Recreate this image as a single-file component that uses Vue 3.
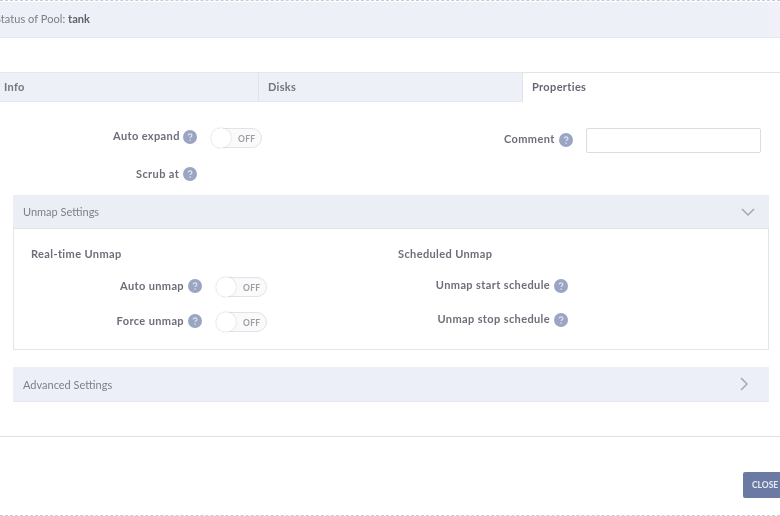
<template>
  <div class="page">
    <div class="dash"></div>
    <header class="status">
      <span class="status-text">Status of Pool: <b>tank</b></span>
    </header>

    <nav class="tabs">
      <div class="tab info">Info</div>
      <div class="tab disks">Disks</div>
      <div class="tab active">Properties</div>
    </nav>

    <section class="props">
      <div class="prop-col left">
        <div class="field first">
          <span class="label">Auto expand</span>
          <HelpIcon />
          <span class="toggle"><i class="knob"></i><span class="off">OFF</span></span>
        </div>
        <div class="field scrub">
          <span class="label">Scrub at</span>
          <HelpIcon />
        </div>
      </div>
      <div class="prop-col right">
        <span class="label">Comment</span>
        <HelpIcon />
        <span class="comment"></span>
      </div>
    </section>

    <section class="panel">
      <div class="panel-head open">
        <span>Unmap Settings</span>
        <svg class="chev" width="16" height="10" viewBox="0 0 16 10"><path d="M2 2l6 6 6-6" /></svg>
      </div>
      <div class="panel-body">
        <div class="unmap-col real">
          <h4>Real-time Unmap</h4>
          <div class="unmap-row">
            <span class="label">Auto unmap</span>
            <HelpIcon />
            <span class="toggle"><i class="knob"></i><span class="off">OFF</span></span>
          </div>
          <div class="unmap-row">
            <span class="label">Force unmap</span>
            <HelpIcon />
            <span class="toggle"><i class="knob"></i><span class="off">OFF</span></span>
          </div>
        </div>
        <div class="unmap-col sched">
          <h4>Scheduled Unmap</h4>
          <div class="unmap-row">
            <span class="label">Unmap start schedule</span>
            <HelpIcon />
          </div>
          <div class="unmap-row">
            <span class="label">Unmap stop schedule</span>
            <HelpIcon />
          </div>
        </div>
      </div>
    </section>

    <section class="panel advanced">
      <div class="panel-head closed">
        <span>Advanced Settings</span>
        <svg class="chev" width="10" height="16" viewBox="0 0 10 16"><path d="M2 2l6 6-6 6" /></svg>
      </div>
    </section>

    <div class="rule"></div>

    <footer class="foot">
      <span class="close">CLOSE</span>
    </footer>
    <div class="dash bottom"></div>
  </div>
</template>

<script setup>
import { h } from 'vue'

const HelpIcon = () =>
  h('span', { class: 'help-wrap' }, [
    h('svg', { width: 14, height: 14, viewBox: '0 0 14 14', style: 'display:block' }, [
      h('circle', { cx: 7, cy: 7, r: 7, fill: '#9aa5c4' }),
      h('path', {
        d: 'M5.2 5.4c.1-1 .9-1.6 1.9-1.6s1.8.7 1.8 1.6c0 1.3-1.8 1.3-1.8 2.7',
        fill: 'none',
        stroke: '#dfe3ef',
        'stroke-width': 1.2
      }),
      h('circle', { cx: 7.1, cy: 10.1, r: 0.8, fill: '#dfe3ef' })
    ])
  ])
</script>

<style>
html, body { margin: 0; background: #fff; }
</style>

<style scoped>
.page {
  width: 780px;
  height: 516px;
  overflow: hidden;
  position: relative;
  background: #fff;
  font-family: Lato, "Open Sans", sans-serif;
  color: #6b6e78;
  font-size: 11px;
  filter: blur(0.5px);
  display: flex;
  flex-direction: column;
}
.dash {
  height: 0;
  border-top: 1px dashed #c9cbd2;
  flex: none;
}
.status {
  margin-top: 1px;
  height: 35px;
  flex: none;
  background: linear-gradient(to right, #eef0f8 768px, #f0f1f8 768px);
  border-bottom: 1px solid #e6e7ee;
  display: flex;
  align-items: center;
}
.status-text {
  margin-left: -5px;
  margin-bottom: 2px;
  color: #7b7e88;
  letter-spacing: 0.05px;
}
.status-text b { color: #5f626c; }

.tabs {
  margin-top: 34px;
  height: 30px;
  flex: none;
  display: flex;
}
.tab {
  box-sizing: border-box;
  padding-left: 4px;
  line-height: 27px;
  font-weight: 700;
  background: #eef0f8;
  border-bottom: 1px solid #e6e7ee;
  border-top: 1px solid #e6e7ee;
  color: #71747e;
  letter-spacing: 0.3px;
}
.tab.info { width: 259px; border-right: 1px solid #e2e3ea; }
.tab.disks { width: 264px; padding-left: 9px; border-right: 1px solid #e2e3ea; }
.tab.active {
  flex: 1;
  background: #fff;
  padding-left: 9px;
  border-bottom: 0;
  border-top: 1px solid #e2e3e8;
  color: #666973;
  letter-spacing: 0.35px;
}

.props {
  height: 93px;
  flex: none;
  display: flex;
}
.prop-col.left { width: 480px; }
.prop-col.right {
  flex: 1;
  display: flex;
  align-items: flex-start;
  margin-top: 26px;
  margin-left: 24px;
}
.field {
  display: flex;
  align-items: center;
  padding-left: 113px;
}
.field.first { margin-top: 26px; }
.field.first .label { margin-bottom: 6px; width: 66px; }
.field.first :deep(.help-wrap) { margin-bottom: 2px; }
.field.scrub { margin-top: 17px; padding-left: 136px; }
.field.scrub :deep(.help-wrap) { margin-top: 2px; }
.field.scrub .label { width: 43px; }
.label {
  font-weight: 700;
  color: #6c6f79;
  white-space: nowrap;
  letter-spacing: 0.38px;
}
:deep(.help-wrap) { display: inline-block; margin-left: 4px; flex: none; }
.toggle {
  margin-left: 14px;
  width: 51px;
  height: 20px;
  box-sizing: border-box;
  border: 1px solid #e2e3e8;
  border-radius: 10px;
  position: relative;
  display: inline-block;
  flex: none;
  background: #fafafb;
}
.knob {
  position: absolute;
  left: -1px;
  top: -1px;
  width: 20px;
  height: 20px;
  border-radius: 50%;
  background: #fff;
  box-shadow: 0 0 2px rgba(0, 0, 0, 0.18);
}
.off {
  position: absolute;
  left: 26px;
  top: 5px;
  font-size: 8.5px;
  line-height: 10px;
  font-weight: 700;
  color: #9b9da5;
  letter-spacing: 0.3px;
}
.prop-col.right > .label { margin-top: 4px; }
.prop-col.right > :deep(.help-wrap) { margin-top: 5px; }
.comment {
  margin-left: 13px;
  width: 175px;
  height: 25px;
  box-sizing: border-box;
  border: 1px solid #dcdde2;
  border-radius: 2px;
  flex: none;
}

.panel {
  margin-left: 13px;
  width: 756px;
  flex: none;
  box-sizing: border-box;
}
.panel-head {
  display: flex;
  align-items: center;
  justify-content: space-between;
  padding: 0 13px 0 10px;
  color: #7d808a;
  box-sizing: border-box;
}
.panel-head.open { height: 34px; background: #eceef5; border-bottom: 1px solid #e3e4ea; }
.panel-head.closed { height: 35px; background: #eceff8; border-bottom: 1px solid #e6e7ee; padding-right: 20px; }
.chev path { fill: none; stroke: #a4a7b0; stroke-width: 1.5; }
.panel-body {
  height: 121px;
  border: 1px solid #e4e5ea;
  border-top: 0;
  display: flex;
  box-sizing: border-box;
}
.unmap-col h4 {
  margin: 18px 0 0;
  font-size: 11px;
  font-weight: 700;
  line-height: 14px;
  color: #6c6f79;
  letter-spacing: 0.38px;
}
.unmap-col.real { width: 366px; padding-left: 17px; box-sizing: border-box; }
.unmap-col.sched { flex: 1; padding-left: 18px; }
.unmap-row {
  display: flex;
  align-items: center;
  height: 20px;
  justify-content: flex-end;
}
.real .unmap-row { margin-top: 14px; width: 236px; }
.real .unmap-row + .unmap-row { margin-top: 15px; }
.real .toggle { margin-top: 4px; }
.real :deep(.help-wrap) { margin-top: 2px; }
.sched .unmap-row { width: 170px; margin-top: 13px; }
.sched .unmap-row + .unmap-row { margin-top: 14px; }
.sched :deep(.help-wrap) { margin-top: 3px; }

.advanced { margin-top: 17px; }

.rule {
  margin-top: 34px;
  height: 0;
  border-top: 1px solid #e0e1e6;
  flex: none;
}
.foot {
  flex: 1;
  position: relative;
  overflow: hidden;
}
.close {
  position: absolute;
  left: 743px;
  top: 35px;
  width: 50px;
  height: 26px;
  box-sizing: border-box;
  padding-left: 9px;
  background: #6a7aa3;
  border-radius: 2px;
  color: #e8ebf4;
  font-size: 8.5px;
  font-weight: 700;
  line-height: 26px;
}
</style>
